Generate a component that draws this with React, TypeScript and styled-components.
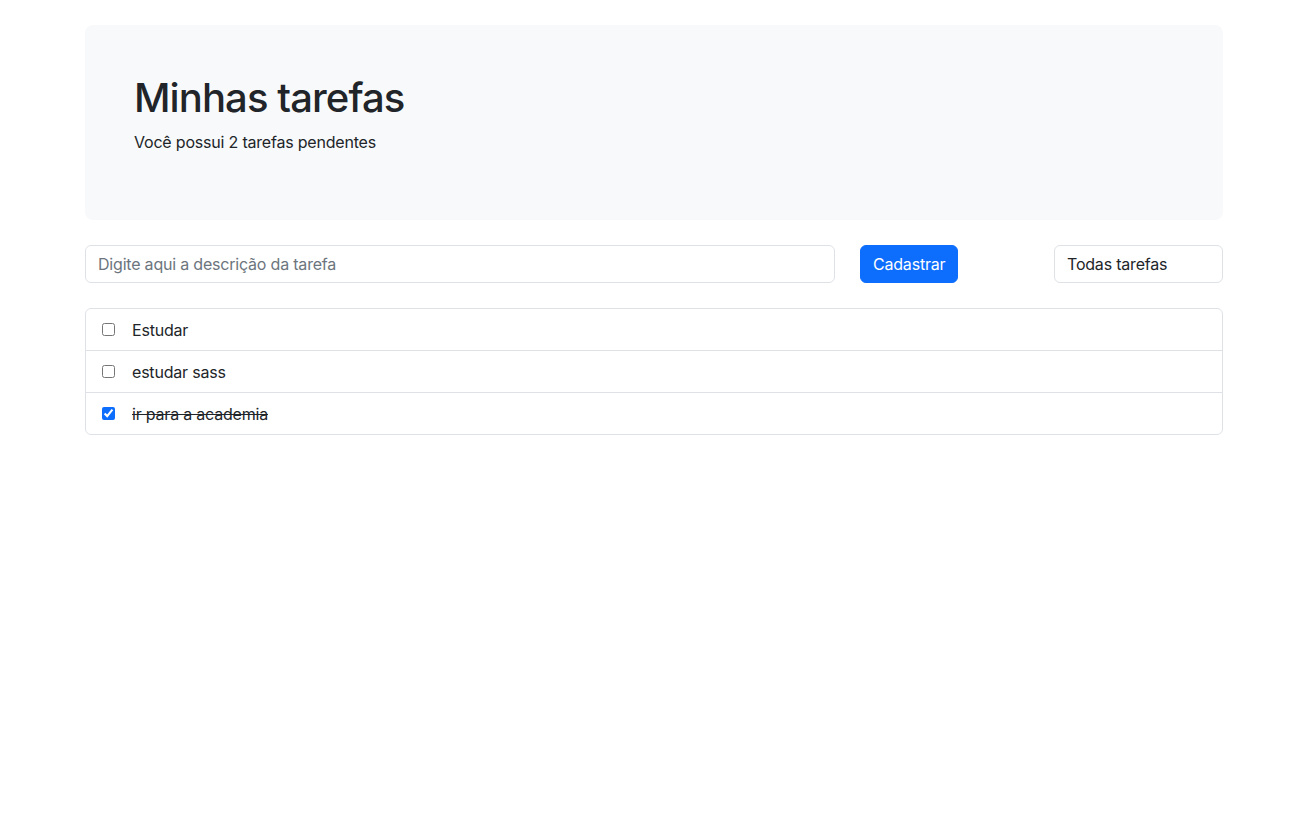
import { useState } from 'react';
import styled, { createGlobalStyle } from 'styled-components';

const GlobalStyle = createGlobalStyle`
  * {
    box-sizing: border-box;
  }

  body {
    margin: 0;
    background: #fff;
    color: #212529;
    font-family: Inter, 'Noto Sans', sans-serif;
    font-size: 16px;
    line-height: 1.5;
    letter-spacing: -0.2px;
  }
`;

const Container = styled.div`
  width: 1138px;
  margin: 25px auto 0;
`;

const Header = styled.header`
  padding: 49px 49px 50px;
  background: #f8f9fa;
  border-radius: 8px;
`;

const Title = styled.h1`
  margin: 0 0 8px;
  font-size: 40px;
  font-weight: 500;
  line-height: 1.2;
  letter-spacing: -0.9px;
`;

const Subtitle = styled.p`
  margin: 0 0 16px;
`;

const Form = styled.form`
  display: grid;
  grid-template-columns: 750px 169px 169px;
  column-gap: 25px;
  margin-top: 25px;
`;

const Input = styled.input`
  height: 38px;
  padding: 6px 12px;
  border: 1px solid #dee2e6;
  border-radius: 6px;
  font: inherit;
  letter-spacing: inherit;
  color: #212529;
  outline: none;

  &::placeholder {
    color: #6c757d;
  }
`;

const Button = styled.button`
  justify-self: start;
  height: 38px;
  padding: 6px 12px;
  border: 1px solid #0d6efd;
  border-radius: 6px;
  background: #0d6efd;
  color: #fff;
  font: inherit;
  letter-spacing: inherit;
  cursor: pointer;
`;

const Select = styled.select`
  height: 38px;
  padding: 6px 12px;
  border: 1px solid #dee2e6;
  border-radius: 6px;
  background: #fff;
  color: #212529;
  font: inherit;
  letter-spacing: inherit;
  appearance: none;
  outline: none;
`;

const List = styled.ul`
  margin: 25px 0 0;
  padding: 0;
  list-style: none;
  border: 1px solid #dee2e6;
  border-radius: 6px;
`;

const Item = styled.li`
  display: flex;
  align-items: center;
  height: 41px;
  padding: 0 16px;

  & + & {
    height: 42px;
    border-top: 1px solid #dee2e6;
  }
`;

const Check = styled.input`
  width: 13px;
  height: 13px;
  margin: 0 17px 0 0;
  accent-color: #0d6efd;
`;

const Label = styled.span<{ $done: boolean }>`
  text-decoration: ${({ $done }) => ($done ? 'line-through' : 'none')};
`;

type Task = { id: number; text: string; done: boolean };

export default function App() {
  const [tasks, setTasks] = useState<Task[]>([
    { id: 1, text: 'Estudar', done: false },
    { id: 2, text: 'estudar sass', done: false },
    { id: 3, text: 'ir para a academia', done: true },
  ]);

  const pending = tasks.filter((t) => !t.done).length;

  const toggle = (id: number) =>
    setTasks((list) => list.map((t) => (t.id === id ? { ...t, done: !t.done } : t)));

  return (
    <>
      <GlobalStyle />
      <Container>
        <Header>
          <Title>Minhas tarefas</Title>
          <Subtitle>Você possui {pending} tarefas pendentes</Subtitle>
        </Header>

        <Form onSubmit={(e) => e.preventDefault()}>
          <Input type="text" placeholder="Digite aqui a descrição da tarefa" />
          <Button type="submit">Cadastrar</Button>
          <Select defaultValue="todas">
            <option value="todas">Todas tarefas</option>
            <option value="pendentes">Pendentes</option>
            <option value="concluidas">Concluídas</option>
          </Select>
        </Form>

        <List>
          {tasks.map((task) => (
            <Item key={task.id}>
              <Check type="checkbox" checked={task.done} onChange={() => toggle(task.id)} />
              <Label $done={task.done}>{task.text}</Label>
            </Item>
          ))}
        </List>
      </Container>
    </>
  );
}
